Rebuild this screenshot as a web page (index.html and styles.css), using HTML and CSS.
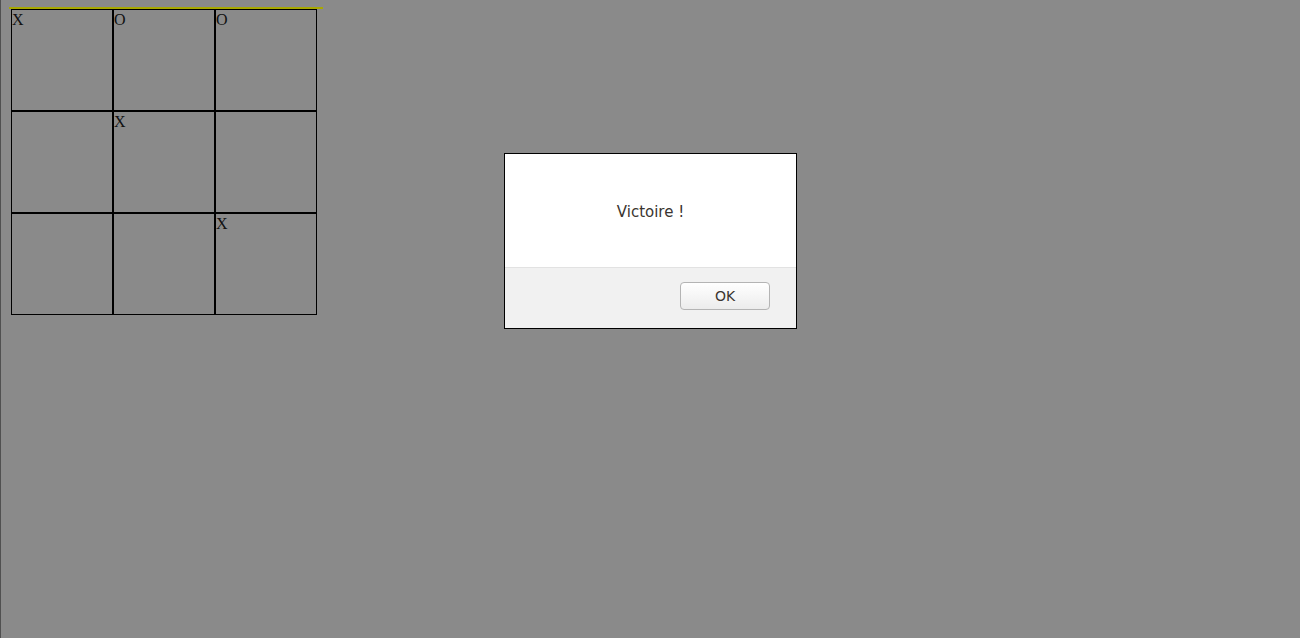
FILE: index.html
```html
<!DOCTYPE html>
<html lang="fr">
<head>
<meta charset="utf-8">
<title>Morpion</title>
<link rel="stylesheet" href="styles.css">
</head>
<body>
<div class="bar"></div>
<table class="board">
  <tr><td>X</td><td>O</td><td>O</td></tr>
  <tr><td></td><td>X</td><td></td></tr>
  <tr><td></td><td></td><td>X</td></tr>
</table>
<div class="dialog">
  <div class="dialog-body">Victoire !</div>
  <div class="dialog-foot"><button class="ok">OK</button></div>
</div>
</body>
</html>
```
FILE: styles.css
```css
html {
  background: #8a8a8a;
  border-left: 1px solid #505050;
  height: 100%;
  box-sizing: border-box;
}
body {
  margin: 0;
  padding: 7px 0 0 8px;
  font-family: "Liberation Serif", serif;
  font-size: 16px;
  color: #111;
}
.bar {
  width: 314px;
  height: 2px;
  background: #a8a800;
}
.board {
  border-collapse: separate;
  border-spacing: 0;
  margin-left: 2px;
}
.board td {
  width: 100px;
  height: 100px;
  padding: 0;
  border: 1px solid #000;
  vertical-align: top;
  line-height: 20px;
}
.dialog {
  position: fixed;
  left: 504px;
  top: 153px;
  width: 291px;
  height: 174px;
  border: 1px solid #000;
  background: #fff;
  display: flex;
  flex-direction: column;
  font-family: "DejaVu Sans", sans-serif;
}
.dialog-body {
  flex: 1;
  display: flex;
  align-items: center;
  justify-content: center;
  font-size: 15px;
  color: #3b3530;
  padding-top: 3px;
}
.dialog-foot {
  height: 61px;
  box-sizing: border-box;
  background: #f1f1f1;
  border-top: 1px solid #e2e2e2;
  display: flex;
  align-items: flex-start;
  justify-content: flex-end;
  padding: 14px 26px 0 0;
}
.ok {
  width: 90px;
  height: 28px;
  border: 1px solid #b4b4b4;
  border-radius: 4px;
  background: linear-gradient(#ffffff, #ececec);
  font-family: "DejaVu Sans", sans-serif;
  font-size: 14px;
  color: #3b3530;
  padding: 0;
}
```
